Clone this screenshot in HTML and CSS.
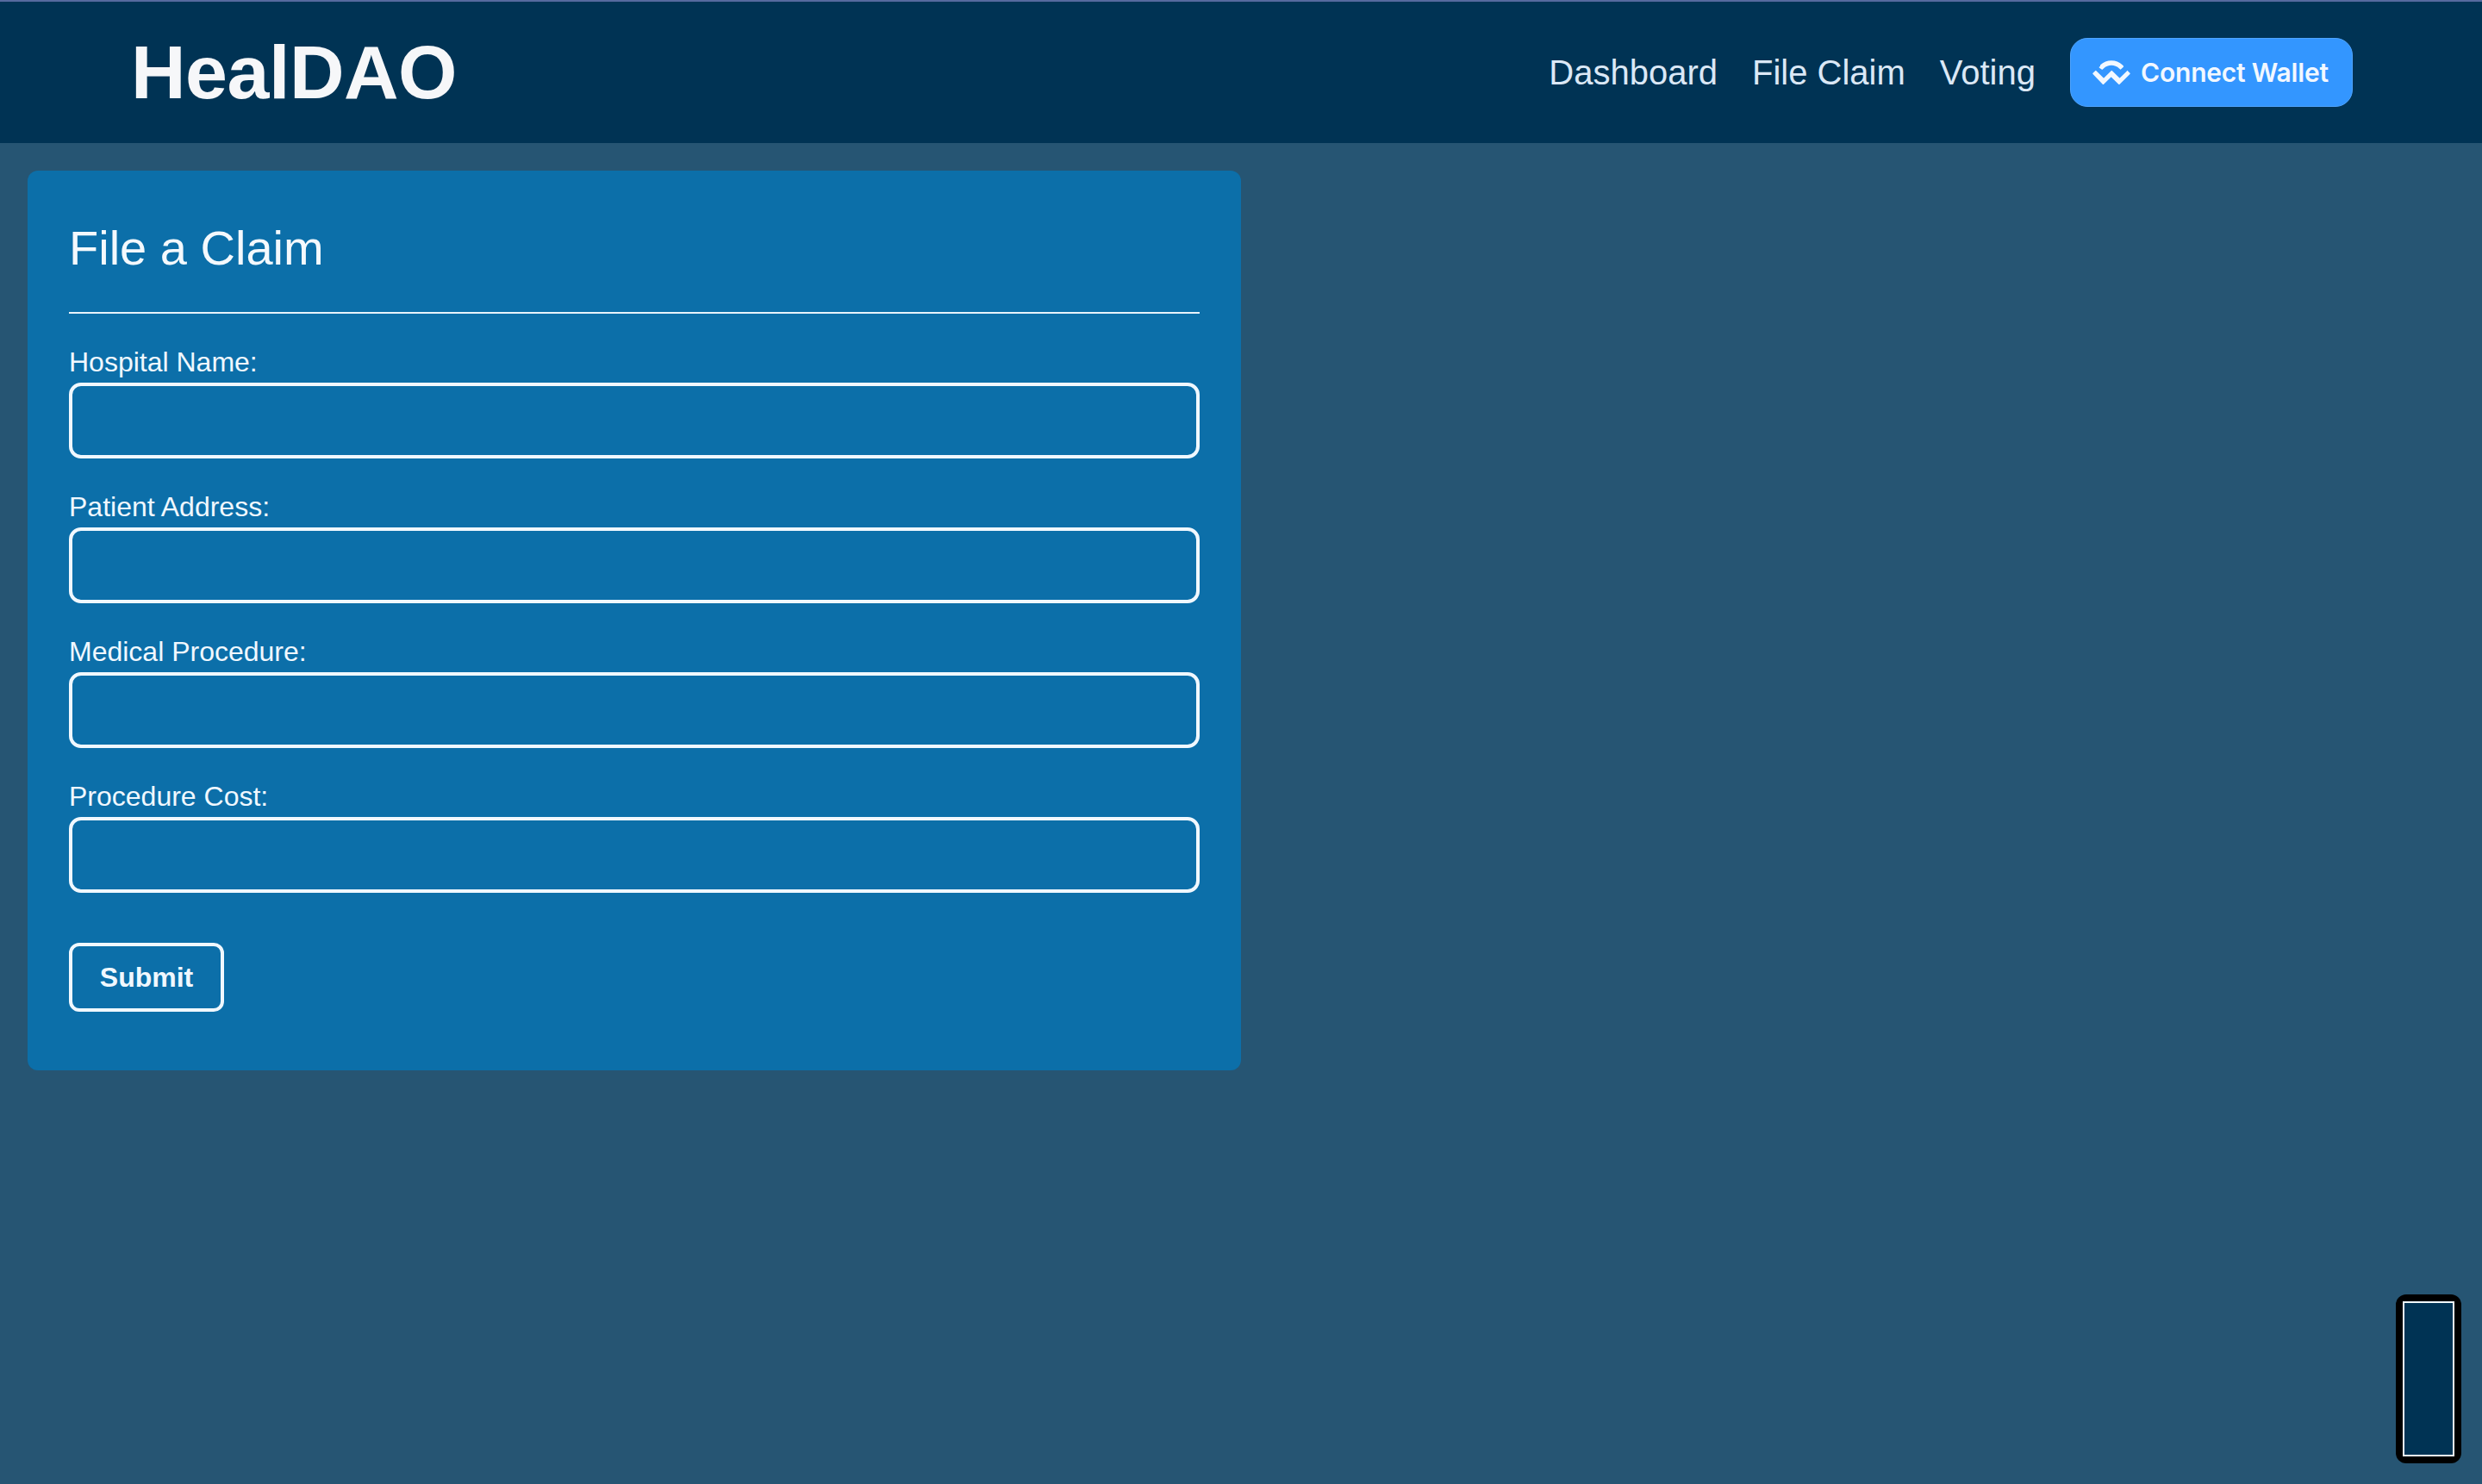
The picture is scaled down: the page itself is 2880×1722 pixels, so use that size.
FILE: index.html
```html
<!DOCTYPE html>
<html lang="en">
    <head>
        <title>HealDAO</title>
        <link rel="stylesheet" href="styles.css">
    </head>
    <body>
        <header class="navbar">
            <div class="logo">HealDAO</div>
            <nav class="nav-links">
                <a href="#" class="nav-link">Dashboard</a>
                <a href="#" class="nav-link">File Claim</a>
                <a href="#" class="nav-link">Voting</a>
                <button class="connect-btn" type="button">
                    <svg class="wc-icon" viewBox="0 0 40 25" aria-hidden="true">
                        <path d="M8.19 4.84c6.53-6.4 17.1-6.4 23.62 0l.79.77a.8.8 0 0 1 0 1.16l-2.69 2.64a.43.43 0 0 1-.6 0l-1.08-1.06c-4.55-4.46-11.94-4.46-16.49 0l-1.16 1.13a.43.43 0 0 1-.6 0L7.29 7.84a.8.8 0 0 1 0-1.16l.9-.84zM37.1 10.8l2.4 2.35a.8.8 0 0 1 0 1.16L28.7 24.9a.85.85 0 0 1-1.18 0l-7.66-7.5a.21.21 0 0 0-.3 0l-7.66 7.5a.85.85 0 0 1-1.18 0L.5 14.31a.8.8 0 0 1 0-1.16l2.4-2.35a.85.85 0 0 1 1.18 0l7.66 7.5a.21.21 0 0 0 .3 0l7.66-7.5a.85.85 0 0 1 1.18 0l7.66 7.5a.21.21 0 0 0 .3 0l7.66-7.5a.85.85 0 0 1 1.18 0z"/>
                    </svg>
                    Connect Wallet
                </button>
            </nav>
        </header>

        <main class="content">
            <form action="#" class="claim-card">
                <h2 class="claim-title">File a Claim</h2>
                <div class="field">
                    <label for="hospital">Hospital Name:</label>
                    <input id="hospital" type="text">
                </div>
                <div class="field">
                    <label for="patient">Patient Address:</label>
                    <input id="patient" type="text">
                </div>
                <div class="field">
                    <label for="procedure">Medical Procedure:</label>
                    <input id="procedure" type="text">
                </div>
                <div class="field">
                    <label for="cost">Procedure Cost:</label>
                    <input id="cost" type="text">
                </div>
                <button class="submit-btn" type="submit">Submit</button>
            </form>
        </main>

        <div class="side-widget"><div class="side-widget-inner"></div></div>
    </body>
</html>
```

FILE: styles.css
```css
html, body{
    margin: 0;
    height: 100%;
    overflow: hidden;
}
body{
    background-color: #265573;
    font-family: "Liberation Sans", Arial, sans-serif;
    color: #f0f8ff;
}

.navbar{
    box-sizing: border-box;
    height: 166px;
    display: flex;
    align-items: center;
    justify-content: space-between;
    padding: 0 150px 0 152px;
    background-color: #003354;
    border-top: 2px solid #566a9e;
}
.logo{
    font-size: 88px;
    font-weight: bold;
    color: #f6f7f9;
    letter-spacing: -0.5px;
}
.nav-links{
    display: flex;
    align-items: center;
    gap: 40px;
}
.nav-link{
    font-size: 40px;
    color: #dbe8f6;
    text-decoration: none;
}
.connect-btn{
    box-sizing: border-box;
    width: 328px;
    height: 80px;
    display: flex;
    align-items: center;
    gap: 12px;
    padding: 0 0 0 25px;
    border: 1px solid #4fa4ff;
    border-radius: 20px;
    background-color: #3396ff;
    color: #f2f8ff;
    font-family: Inter, "Noto Sans", sans-serif;
    font-size: 30px;
    font-weight: 600;
    letter-spacing: -0.2px;
}
.wc-icon{
    width: 44px;
    height: 28px;
    fill: #f2f8ff;
}

.content{
    padding: 32px;
}
.claim-card{
    box-sizing: border-box;
    width: 1408px;
    height: 1044px;
    padding: 57px 48px 0 48px;
    background-color: #0c6fa9;
    border-radius: 12px;
}
.claim-title{
    margin: 0 0 38px 0;
    padding-bottom: 42px;
    border-bottom: 2px solid #e8f3fb;
    font-size: 56px;
    font-weight: normal;
    color: #f4f9fd;
}
.field{
    display: flex;
    flex-direction: column;
    gap: 5px;
    margin-bottom: 38px;
}
.field label{
    font-size: 32px;
}
.field input{
    box-sizing: border-box;
    height: 88px;
    background: transparent;
    border: 4px solid #f0f8ff;
    border-radius: 14px;
    color: #f0f8ff;
    font-size: 32px;
}
.submit-btn{
    box-sizing: border-box;
    display: block;
    width: 180px;
    height: 80px;
    margin-top: 58px;
    background: transparent;
    border: 4px solid #f0f8ff;
    border-radius: 12px;
    color: #f0f8ff;
    font-family: "Liberation Sans", Arial, sans-serif;
    font-size: 32px;
    font-weight: bold;
}

.side-widget{
    position: fixed;
    right: 24px;
    bottom: 24px;
    box-sizing: border-box;
    width: 76px;
    height: 196px;
    padding: 8px;
    background-color: #000;
    border-radius: 12px;
}
.side-widget-inner{
    box-sizing: border-box;
    height: 100%;
    background-color: #003354;
    border: 2px solid #f0f8ff;
}
```
